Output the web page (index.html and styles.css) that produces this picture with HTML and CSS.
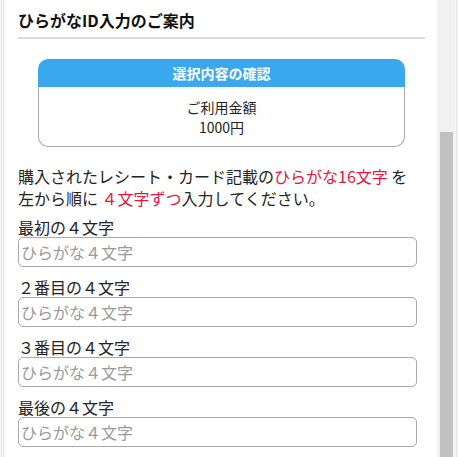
FILE: index.html
```html
<!DOCTYPE html>
<html lang="ja">
<head>
<meta charset="utf-8">
<title>ひらがなID入力のご案内</title>
<link rel="stylesheet" href="styles.css">
</head>
<body>
<div class="edge edge-left"></div>
<main class="panel">
  <h1 class="title">ひらがなID入力のご案内</h1>
  <section class="card">
    <div class="card-head">選択内容の確認</div>
    <div class="card-body">
      <div>ご利用金額</div>
      <div>1000円</div>
    </div>
  </section>
  <p class="lead">購入されたレシート・カード記載の<span class="em">ひらがな16文字</span> を<br>左から順に <span class="em">４文字ずつ</span>入力してください。</p>
  <form class="form">
    <label class="field">
      <span class="label">最初の４文字</span>
      <input class="input" type="text" placeholder="ひらがな４文字">
    </label>
    <label class="field">
      <span class="label">２番目の４文字</span>
      <input class="input" type="text" placeholder="ひらがな４文字">
    </label>
    <label class="field">
      <span class="label">３番目の４文字</span>
      <input class="input" type="text" placeholder="ひらがな４文字">
    </label>
    <label class="field">
      <span class="label">最後の４文字</span>
      <input class="input" type="text" placeholder="ひらがな４文字">
    </label>
  </form>
</main>
<div class="scrollbar"><div class="thumb"></div></div>
<div class="edge edge-right"></div>
</body>
</html>
```

FILE: styles.css
```css
* { box-sizing: border-box; }
html, body { margin: 0; padding: 0; }
body {
  display: flex;
  height: 457px;
  overflow: hidden;
  font-family: "Noto Sans CJK JP", "Noto Sans", sans-serif;
  color: #222;
  background: #fff;
}
.edge {
  background-color: #f4f4f4;
  background-image: repeating-linear-gradient(90deg, #f6f6f6 0 1px, #e9e9e9 1px 2px);
}
.edge-left { width: 5px; flex: none; }
.edge-right { width: 3px; flex: none; }
.panel {
  flex: 1;
  background: #fff;
  padding: 10px 12px 0 13px;
  overflow: hidden;
}
.title {
  margin: 0;
  font-size: 16px;
  line-height: 20px;
  font-weight: bold;
  color: #111;
  padding-bottom: 7px;
  border-bottom: 2px solid #dcdcdc;
}
.card {
  margin: 20px 20px 0;
}
.card-head {
  height: 28px;
  line-height: 28px;
  background: #3aa8ef;
  color: #fff;
  font-size: 14px;
  font-weight: bold;
  text-align: center;
  border-radius: 10px 10px 0 0;
}
.card-body {
  border: 1px solid #a8a8a8;
  border-top: none;
  border-radius: 0 0 10px 10px;
  padding: 10px 0 9px;
  text-align: center;
  font-size: 14px;
  line-height: 20px;
}
.lead {
  margin: 18px 0 8px;
  font-size: 16px;
  line-height: 22px;
}
.em { color: #e3173d; }
.form { display: flex; flex-direction: column; }
.field {
  display: flex;
  flex-direction: column;
  margin-bottom: 10px;
}
.label {
  font-size: 16px;
  line-height: 20px;
}
.input {
  width: 98%;
  height: 30px;
  margin: 0;
  border: 1px solid #a9a9a9;
  border-radius: 5px;
  padding: 0 2px;
  font-family: inherit;
  font-size: 16px;
  color: #222;
  background: #fff;
}
.input::placeholder { color: #9a9a9a; }
.scrollbar {
  width: 18px;
  flex: none;
  background: #f1f1f1;
  display: flex;
  flex-direction: column;
  align-items: center;
}
.thumb {
  margin-top: 132px;
  width: 13px;
  flex: 1;
  background: #c1c1c1;
}
```
